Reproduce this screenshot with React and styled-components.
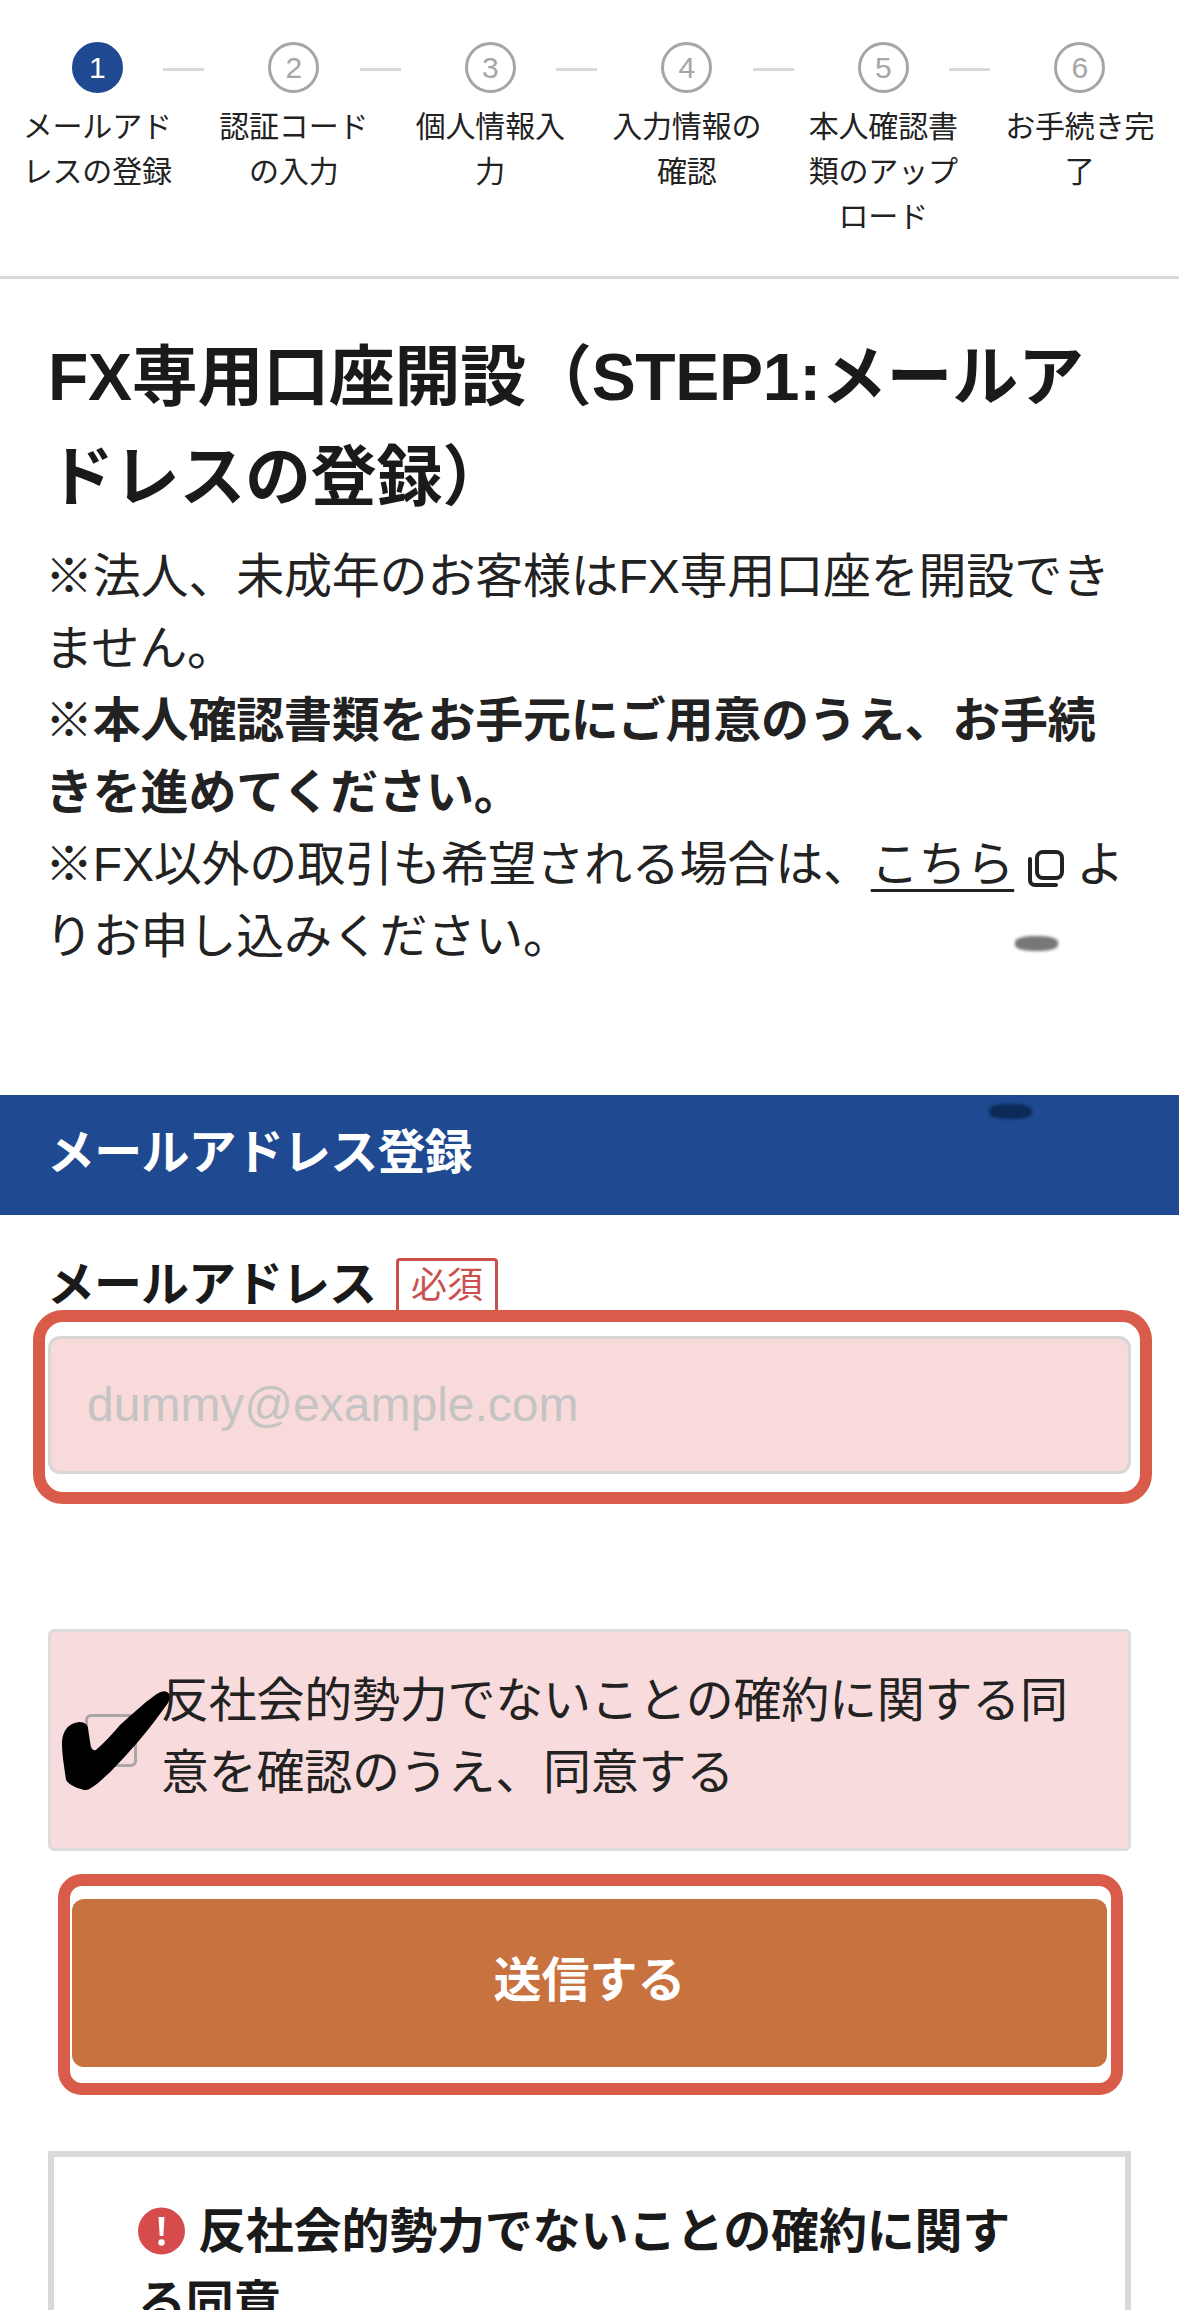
import React from "react";
import styled, { createGlobalStyle } from "styled-components";

const Global = createGlobalStyle`
  html, body { margin: 0; padding: 0; background: #fff; }
  body { overflow: hidden; }
  * { box-sizing: border-box; }
`;

const Page = styled.div`
  width: 1179px;
  height: 2310px;
  overflow: hidden;
  background: #fff;
  color: #222;
  font-family: "Liberation Sans", "Noto Sans CJK JP", sans-serif;
  font-size: 48px;
  line-height: 72px;
`;

const Stepper = styled.ol`
  display: grid;
  grid-template-columns: repeat(6, 1fr);
  margin: 0;
  padding: 42px 0 37px;
  list-style: none;
  border-bottom: 3px solid #d9d9d9;
`;

const Step = styled.li`
  position: relative;
  display: flex;
  flex-direction: column;
  align-items: center;
  padding: 0 18px;
  transform: translateX(-1px);
  &:not(:last-child)::after {
    content: "";
    position: absolute;
    top: 26px;
    left: 164px;
    width: 41px;
    height: 3px;
    background: #d9d9d9;
  }
`;

const StepDot = styled.span`
  display: flex;
  align-items: center;
  justify-content: center;
  width: 51px;
  height: 51px;
  border-radius: 50%;
  border: 3px solid ${(p) => (p.$active ? "#1f4a91" : "#a6a6a6")};
  background: ${(p) => (p.$active ? "#1f4a91" : "#fff")};
  color: ${(p) => (p.$active ? "#fff" : "#a6a6a6")};
  font-size: 30px;
  line-height: 1;
`;

const StepLabel = styled.span`
  margin-top: 11px;
  width: 160px;
  font-size: 30px;
  line-height: 45px;
  letter-spacing: -0.2px;
  text-align: center;
  color: #222;
`;

const Intro = styled.section`
  position: relative;
  padding: 48px 48px 122px;
`;

const Title = styled.h1`
  margin: 0 0 14px;
  font-size: 66px;
  line-height: 100px;
  font-weight: 700;
  letter-spacing: -0.3px;
  color: #1a1a1a;
`;

const Note = styled.p`
  margin: 0 0 0 -3px;
  letter-spacing: -0.2px;
  font-weight: ${(p) => (p.$strong ? 700 : 400)};
`;

const ExtLink = styled.a`
  color: #222;
  text-decoration: underline;
  text-decoration-thickness: 3px;
  text-underline-offset: 8px;
`;

const ExtIcon = styled.svg`
  width: 38px;
  height: 38px;
  margin: 0 11px 0 13px;
  vertical-align: -6px;
`;

const Smudge = styled.span`
  position: absolute;
  top: ${(p) => p.$top}px;
  left: ${(p) => p.$left}px;
  width: 43px;
  height: 15px;
  border-radius: 40%;
  background: ${(p) => p.$color};
  filter: blur(1.5px);
`;

const Band = styled.h2`
  position: relative;
  margin: 0;
  height: 120px;
  padding: 22px 48px 0 47px;
  background: #1f4a91;
  color: #fff;
  font-size: 48px;
  line-height: 72px;
  font-weight: 700;
  letter-spacing: -0.8px;
`;

const FormBody = styled.form`
  padding: 34px 48px 0;
`;

const FieldLabel = styled.div`
  display: flex;
  align-items: flex-start;
  gap: 20px;
  height: 61px;
  margin-left: -1px;
  font-weight: 700;
  letter-spacing: -1px;
  color: #1a1a1a;
`;

const Required = styled.span`
  flex: none;
  margin-top: 9px;
  width: 102px;
  height: 60px;
  border: 3px solid #c9504f;
  border-radius: 4px;
  color: #c9504f;
  font-size: 36px;
  line-height: 50px;
  font-weight: 400;
  letter-spacing: 0;
  text-align: center;
`;

const Ring = styled.div`
  position: relative;
  background: #fff;
  border: 12px solid #d95b4a;
  border-radius: ${(p) => p.$radius}px;
  margin: ${(p) => p.$margin};
  padding: ${(p) => p.$padding};
`;

const EmailInput = styled.input`
  display: block;
  width: 100%;
  height: 138px;
  padding: 0 36px 2px;
  background: #f8dadb;
  border: 3px solid #d9d6d6;
  border-radius: 12px;
  font-family: "Liberation Sans", sans-serif;
  font-size: 48px;
  outline: none;
  &::placeholder {
    color: #c6c3c3;
    opacity: 1;
  }
`;

const Agreement = styled.label`
  position: relative;
  display: flex;
  align-items: center;
  gap: 24px;
  height: 222px;
  margin-top: 125px;
  padding: 0 36px 6px 34px;
  background: #f8dcdd;
  border: 3px solid #dedbdb;
  border-radius: 6px;
  letter-spacing: -0.25px;
`;

const Box = styled.span`
  flex: none;
  width: 52px;
  height: 53px;
  margin-top: 6px;
  border: 3px solid #aaa6a6;
  border-radius: 6px;
`;

const HandCheck = styled.svg`
  position: absolute;
  top: 58px;
  left: 9px;
  width: 112px;
  height: 102px;
`;

const Submit = styled.button`
  display: block;
  width: 100%;
  height: 168px;
  padding: 0 0 14px;
  border: 0;
  border-radius: 12px;
  background: #c7723f;
  color: #fff;
  font-family: inherit;
  font-size: 48px;
  font-weight: 700;
`;

const Notice = styled.section`
  margin-top: 56px;
  padding: 39px 84px 0;
  border: 6px solid #d9d9d9;
  border-bottom: 0;
`;

const NoticeTitle = styled.h3`
  margin: 0;
  font-size: 48px;
  line-height: 72px;
  font-weight: 700;
  letter-spacing: -0.2px;
  color: #1a1a1a;
`;

const AlertIcon = styled.svg`
  width: 47px;
  height: 48px;
  margin-right: 13px;
  vertical-align: -7px;
`;

const steps = [
  "メールアドレスの登録",
  "認証コードの入力",
  "個人情報入力",
  "入力情報の確認",
  "本人確認書類のアップロード",
  "お手続き完了",
];

export default function App() {
  return (
    <Page>
      <Global />
      <Stepper>
        {steps.map((label, i) => (
          <Step key={label}>
            <StepDot $active={i === 0}>{i + 1}</StepDot>
            <StepLabel>{label}</StepLabel>
          </Step>
        ))}
      </Stepper>

      <Intro>
        <Title>FX専用口座開設（STEP1:メールアドレスの登録）</Title>
        <Note>※法人、未成年のお客様はFX専用口座を開設できません。</Note>
        <Note $strong>※本人確認書類をお手元にご用意のうえ、お手続きを進めてください。</Note>
        <Note>
          ※FX以外の取引も希望される場合は、<ExtLink href="#">こちら</ExtLink>
          <ExtIcon viewBox="0 0 38 38" fill="none" stroke="#222" strokeWidth="4" strokeLinecap="round">
            <rect x="10" y="3" width="25" height="26" rx="6" />
            <path d="M3 10v21a5 5 0 0 0 5 5h21" />
          </ExtIcon>
          よりお申し込みください。
        </Note>
        <Smudge $top={936 - 279} $left={1015} $color="#777" />
      </Intro>

      <Band>
        メールアドレス登録
        <Smudge $top={9} $left={989} $color="#0c2a57" />
      </Band>

      <FormBody>
        <FieldLabel>
          メールアドレス
          <Required>必須</Required>
        </FieldLabel>
        <Ring $radius={30} $margin="0 -21px 0 -15px" $padding="14px 9px 18px 3px">
          <EmailInput type="email" placeholder="dummy@example.com" readOnly />
        </Ring>

        <Agreement>
          <Box />
          <span>反社会的勢力でないことの確約に関する同意を確認のうえ、同意する</span>
          <HandCheck viewBox="0 0 112 102">
            <path
              fill="#000"
              d="M107 2C111 4 110 9 108 13C98 27 88 40 77 53C62 70 44 90 31 98C27 101 23 100 21 99C13 97 8 93 6 90C4 75 2 65 2 53C2 46 5 39 9 36C13 33 17 32 20 32C24 32 28 35 28 38C29 45 30 52 31 57C33 61 35 61 37 59C45 52 53 43 60 35C72 24 83 14 94 6C98 3 103 0 107 2Z"
            />
          </HandCheck>
        </Agreement>

        <Ring $radius={24} $margin="23px 8px 0 10px" $padding="13px 4px 16px 2px">
          <Submit type="button">送信する</Submit>
        </Ring>

        <Notice>
          <NoticeTitle>
            <AlertIcon viewBox="0 0 47 48">
              <circle cx="23.5" cy="24" r="23.5" fill="#d64c4c" />
              <path d="M20.5 10h6l-1.2 19h-3.6z" fill="#fff" />
              <circle cx="23.5" cy="35.5" r="3.2" fill="#fff" />
            </AlertIcon>
            反社会的勢力でないことの確約に関する同意
          </NoticeTitle>
        </Notice>
      </FormBody>
    </Page>
  );
}
